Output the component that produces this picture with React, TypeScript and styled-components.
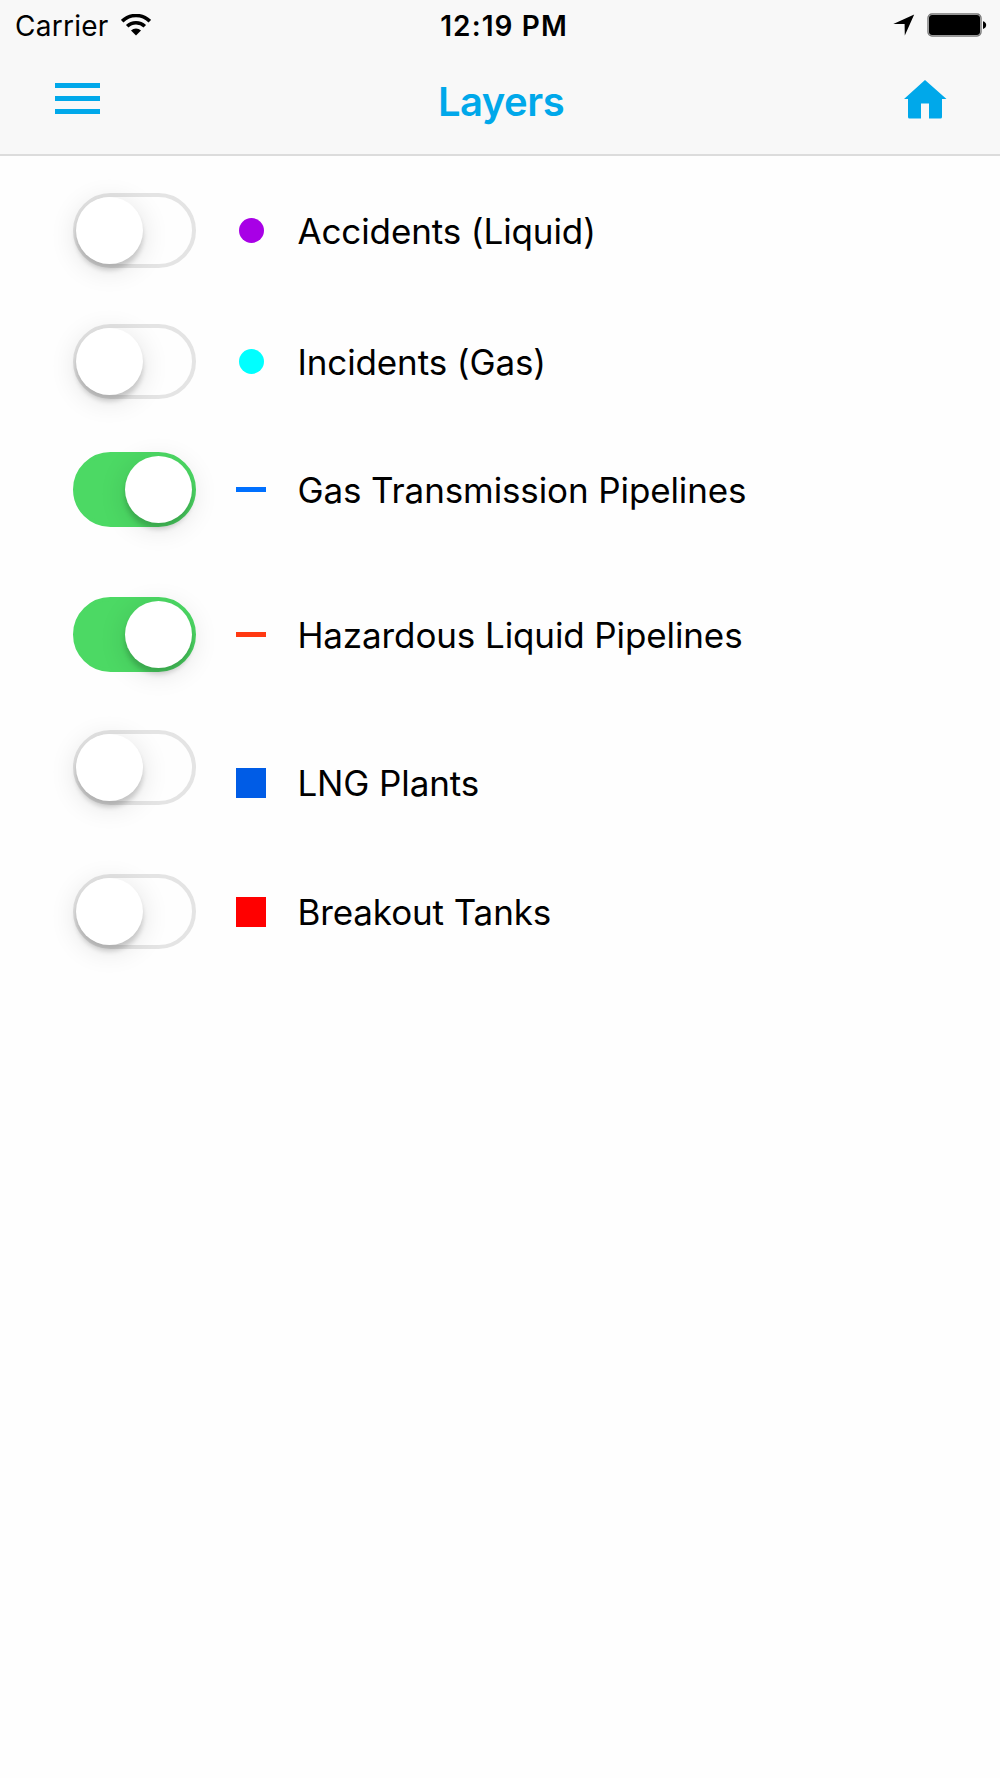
import React, { useState } from "react";
import styled, { createGlobalStyle } from "styled-components";

const GlobalStyle = createGlobalStyle`
  body {
    margin: 0;
    background: #fefefe;
    font-family: Inter, "Liberation Sans", sans-serif;
    color: #000;
  }
  * { box-sizing: border-box; }
`;

const Screen = styled.div`
  width: 1000px;
  height: 1778px;
  overflow: hidden;
`;

const Header = styled.header`
  height: 156px;
  background: #f8f8f8;
  border-bottom: 2px solid #dcdcdc;
`;

const StatusBar = styled.div`
  display: grid;
  grid-template-columns: 1fr auto 1fr;
  align-items: center;
  height: 50px;
  padding: 0 13px 0 15px;
`;

const StatusGroup = styled.div<{ $end?: boolean }>`
  display: flex;
  align-items: center;
  justify-content: ${(p) => (p.$end ? "flex-end" : "flex-start")};
  gap: 12px;
`;

const Carrier = styled.span`
  font-size: 28px;
  line-height: 34px;
  letter-spacing: 0.25px;
  padding-top: 1px;
`;

const Clock = styled.span`
  font-size: 28px;
  line-height: 34px;
  font-weight: 600;
  letter-spacing: 1.1px;
  padding: 1px 0 0 6px;
`;

const NavBar = styled.nav`
  display: grid;
  grid-template-columns: 1fr auto 1fr;
  align-items: start;
  height: 104px;
  padding: 0 53px 0 55px;
`;

const NavButton = styled.button<{ $end?: boolean; $top: number }>`
  justify-self: ${(p) => (p.$end ? "end" : "start")};
  display: block;
  margin: ${(p) => p.$top}px 0 0;
  padding: 0;
  border: 0;
  background: none;
  color: #00a8ea;
  svg { display: block; }
`;

const Title = styled.h1`
  margin: 28px 0 0;
  font-size: 40px;
  line-height: 48px;
  font-weight: 600;
  letter-spacing: -0.5px;
  color: #00a8ea;
`;

const List = styled.ul`
  margin: 0;
  padding: 37px 0 0 73px;
  list-style: none;
`;

const Row = styled.li<{ $gap: number }>`
  display: flex;
  align-items: center;
  height: 75px;
  margin-top: ${(p) => p.$gap}px;
`;

const Track = styled.button<{ $on: boolean; $lift: number }>`
  flex: none;
  display: flex;
  justify-content: ${(p) => (p.$on ? "flex-end" : "flex-start")};
  width: 123px;
  height: 75px;
  margin: 0 0 ${(p) => p.$lift * 2}px;
  padding: 0;
  border: 4px solid ${(p) => (p.$on ? "#4cd964" : "#e4e4e4")};
  border-radius: 38px;
  background: ${(p) => (p.$on ? "#4cd964" : "#fefefe")};
`;

const Knob = styled.span`
  width: 67px;
  height: 67px;
  margin: 0 0 0 -0.6px;
  border-radius: 50%;
  background: #fff;
  box-shadow: 0 6px 5px rgba(0, 0, 0, 0.17), 0 5px 28px rgba(0, 0, 0, 0.12);
`;

const MarkerCell = styled.span`
  flex: none;
  display: flex;
  justify-content: center;
  width: 30px;
  margin: 0 31.4px 0 40px;
`;

type Shape = "dot" | "line" | "square";

const sizes: Record<Shape, [number, number, number]> = {
  dot: [25, 25, 13],
  line: [30, 5, 0],
  square: [30, 30, 0],
};

const Marker = styled.span<{ $shape: Shape; $color: string }>`
  width: ${(p) => sizes[p.$shape][0]}px;
  height: ${(p) => sizes[p.$shape][1]}px;
  border-radius: ${(p) => sizes[p.$shape][2]}px;
  background: ${(p) => p.$color};
`;

const Label = styled.span`
  padding-top: 1px;
  font-size: 35px;
  line-height: 42px;
  white-space: nowrap;
  letter-spacing: -0.11px;
`;

interface Layer {
  name: string;
  shape: Shape;
  color: string;
  on: boolean;
  gap: number;
  lift?: number;
}

const initialLayers: Layer[] = [
  { name: "Accidents (Liquid)", shape: "dot", color: "#a800e6", on: false, gap: 0 },
  { name: "Incidents (Gas)", shape: "dot", color: "#00ffff", on: false, gap: 56 },
  { name: "Gas Transmission Pipelines", shape: "line", color: "#0070ff", on: true, gap: 53 },
  { name: "Hazardous Liquid Pipelines", shape: "line", color: "#ff3912", on: true, gap: 70 },
  { name: "LNG Plants", shape: "square", color: "#005ce6", on: false, gap: 73, lift: 15 },
  { name: "Breakout Tanks", shape: "square", color: "#ff0000", on: false, gap: 54 },
];

const WifiIcon = () => (
  <svg width="30" height="22" viewBox="0 0 30 22">
    <g fill="none" stroke="#000" strokeWidth="3.6">
      <path d="M1.2 7.2a19.6 19.6 0 0 1 27.6 0" />
      <path d="M6.2 12.3a12.5 12.5 0 0 1 17.6 0" />
    </g>
    <path d="M15 21.5l-5-5a7.1 7.1 0 0 1 10 0z" />
  </svg>
);

const LocationIcon = () => (
  <svg width="22" height="22" viewBox="0 0 22 22">
    <path d="M21.2 0.4L11.8 21.4L11.6 10H0.3z" />
  </svg>
);

const BatteryIcon = () => (
  <svg width="60" height="24" viewBox="0 0 60 24">
    <rect x="1" y="1" width="53" height="22" rx="4" fill="#f8f8f8" stroke="#777" strokeWidth="1.4" />
    <rect x="2" y="2" width="51" height="20" rx="3" />
    <path d="M56 8.2c2 .6 3.200 2 3.200 3.900s-1.200 3.300-3.200 3.900z" />
  </svg>
);

const MenuIcon = () => (
  <svg width="45" height="31" viewBox="0 0 45 31" fill="currentColor">
    <path d="M0 0h45v5H0zM0 13h45v5H0zM0 26h45v5H0z" />
  </svg>
);

const HomeIcon = () => (
  <svg width="43" height="39" viewBox="0 0 43 39" fill="currentColor">
    <path d="M21 0L0 19h4v18q0 1.500 1.500 1.500H17V23.500h8v15h11.500q1.500 0 1.500-1.500V19h4.500z" />
  </svg>
);

export default function App() {
  const [layers, setLayers] = useState(initialLayers);
  const toggle = (index: number) =>
    setLayers(layers.map((l, i) => (i === index ? { ...l, on: !l.on } : l)));

  return (
    <Screen>
      <GlobalStyle />
      <Header>
        <StatusBar>
          <StatusGroup>
            <Carrier>Carrier</Carrier>
            <WifiIcon />
          </StatusGroup>
          <Clock>12:19 PM</Clock>
          <StatusGroup $end>
            <LocationIcon />
            <BatteryIcon />
          </StatusGroup>
        </StatusBar>
        <NavBar>
          <NavButton $top={33} aria-label="Menu">
            <MenuIcon />
          </NavButton>
          <Title>Layers</Title>
          <NavButton $end $top={30} aria-label="Home">
            <HomeIcon />
          </NavButton>
        </NavBar>
      </Header>
      <List>
        {layers.map((layer, i) => (
          <Row key={layer.name} $gap={layer.gap}>
            <Track
              role="switch"
              aria-checked={layer.on}
              aria-label={layer.name}
              $on={layer.on}
              $lift={layer.lift ?? 0}
              onClick={() => toggle(i)}
            >
              <Knob />
            </Track>
            <MarkerCell>
              <Marker $shape={layer.shape} $color={layer.color} />
            </MarkerCell>
            <Label>{layer.name}</Label>
          </Row>
        ))}
      </List>
    </Screen>
  );
}
